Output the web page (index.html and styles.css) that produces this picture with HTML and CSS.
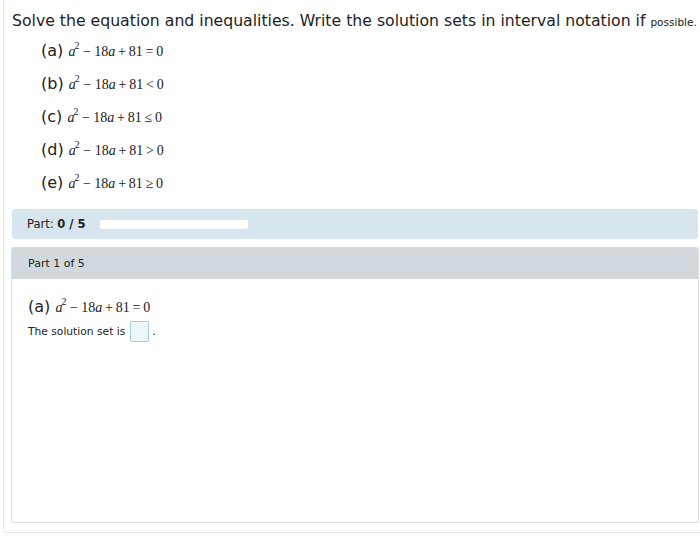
FILE: index.html
```html
<!DOCTYPE html>
<html lang="en">
<head>
    <meta charset="UTF-8">
    <title>Equation and inequalities</title>
    <link rel="stylesheet" href="styles.css">
</head>
<body>
<div class="page">
    <p class="prompt">Solve the equation and inequalities. Write the solution sets in interval notation if <span class="small">possible.</span></p>

    <ul class="items">
        <li><span class="label">(a)</span> <span class="math"><i>a</i><sup>2</sup> &minus; 18<i>a</i>&thinsp;+&thinsp;81&thinsp;=&thinsp;0</span></li>
        <li><span class="label">(b)</span> <span class="math"><i>a</i><sup>2</sup> &minus; 18<i>a</i>&thinsp;+&thinsp;81&thinsp;&lt;&thinsp;0</span></li>
        <li><span class="label">(c)</span> <span class="math"><i>a</i><sup>2</sup> &minus; 18<i>a</i>&thinsp;+&thinsp;81&thinsp;&le;&thinsp;0</span></li>
        <li><span class="label">(d)</span> <span class="math"><i>a</i><sup>2</sup> &minus; 18<i>a</i>&thinsp;+&thinsp;81&thinsp;&gt;&thinsp;0</span></li>
        <li><span class="label">(e)</span> <span class="math"><i>a</i><sup>2</sup> &minus; 18<i>a</i>&thinsp;+&thinsp;81&thinsp;&ge;&thinsp;0</span></li>
    </ul>

    <div class="part-bar">
        <span>Part: <b>0 / 5</b></span>
        <span class="progress"></span>
    </div>

    <div class="part-panel">
        <div class="part-head">Part 1 of 5</div>
        <div class="part-body">
            <p class="question"><span class="label">(a)</span> <span class="math"><i>a</i><sup>2</sup> &minus; 18<i>a</i>&thinsp;+&thinsp;81&thinsp;=&thinsp;0</span></p>
            <p class="answer">The solution set is <span class="answer-box"></span>.</p>
        </div>
    </div>
</div>
</body>
</html>
```

FILE: styles.css
```css
body {
    margin: 0;
    font-family: "DejaVu Sans", Verdana, sans-serif;
    color: #222;
    background: #fff;
}
.page {
    margin-left: 3px;
    width: 720px;
    height: 533px;
    padding: 0 0 0 8px;
    border-left: 1px solid #e6e6e6;
    border-bottom: 1px solid #e6e6e6;
    border-bottom-left-radius: 4px;
    box-sizing: border-box;
}
.prompt {
    margin: 0;
    padding-top: 11px;
    font-size: 15.7px;
    line-height: 20px;
    white-space: nowrap;
}
.prompt .small {
    font-size: 10.5px;
}
.items {
    list-style: none;
    margin: 0;
    padding: 9px 0 0 29px;
}
.items li {
    height: 33px;
    line-height: 20px;
}
.label {
    font-size: 16px;
}
.math {
    font-family: "Liberation Serif", "Times New Roman", serif;
    font-size: 14px;
}
.math sup {
    font-size: 10px;
    vertical-align: 7px;
    line-height: 0;
    margin-left: -1px;
}
.part-bar {
    margin-top: 3px;
    width: 686px;
    height: 30px;
    display: flex;
    align-items: center;
    gap: 15px;
    padding-left: 15px;
    box-sizing: border-box;
    background: #d7e5ef;
    border-radius: 3px;
    font-size: 11.5px;
}
.progress {
    width: 148px;
    height: 9px;
    background: #fff;
    border-radius: 2px;
}
.part-panel {
    margin-top: 8px;
    margin-left: -1px;
    width: 688px;
    height: 276px;
    border: 1px solid #dcdcdc;
    border-top: none;
    border-radius: 3px;
    box-sizing: border-box;
}
.part-head {
    height: 32px;
    line-height: 33px;
    padding-left: 16px;
    background: #d1d9df;
    font-size: 11px;
    border-radius: 3px 3px 0 0;
}
.part-body {
    padding: 16px 0 0 16px;
}
.question {
    margin: 0;
    line-height: 24px;
}
.answer {
    margin: 0;
    padding-top: 1px;
    font-size: 10.7px;
    display: flex;
    align-items: center;
    gap: 3px;
}
.answer-box {
    width: 17px;
    height: 19px;
    border: 1px solid #a8cde0;
    background: #eef6fa;
    border-radius: 2px;
    margin-left: 2px;
}
```
